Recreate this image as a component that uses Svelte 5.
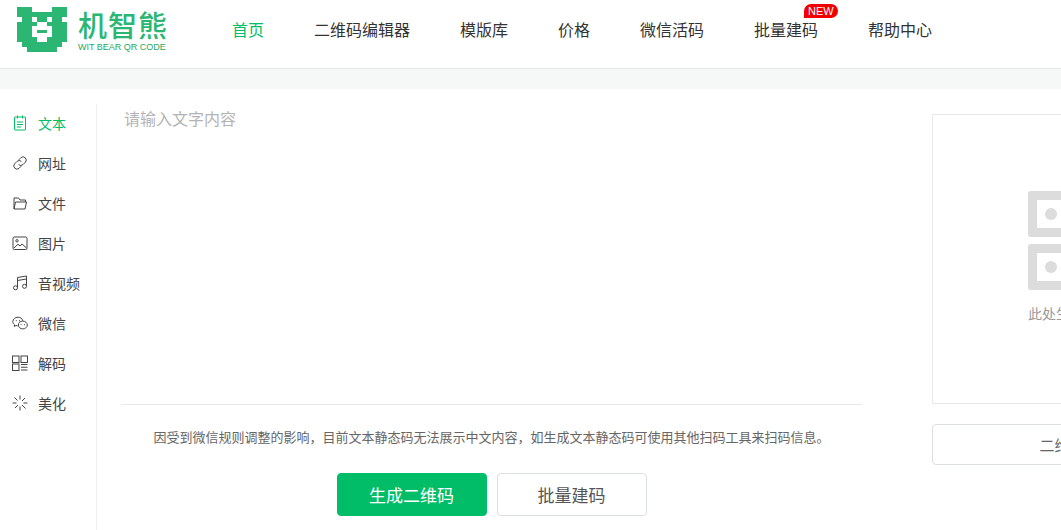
<script>
  const navItems = ['首页', '二维码编辑器', '模版库', '价格', '微信活码', '批量建码', '帮助中心'];

  const sideItems = [
    { name: 'text', label: '文本' },
    { name: 'link', label: '网址' },
    { name: 'file', label: '文件' },
    { name: 'image', label: '图片' },
    { name: 'media', label: '音视频' },
    { name: 'wechat', label: '微信' },
    { name: 'decode', label: '解码' },
    { name: 'style', label: '美化' }
  ];

  // bear head drawn on a 5px pixel grid
  const bear = [
    [0, 0, 15, 5], [35, 0, 15, 5], [0, 5, 50, 5], [5, 10, 40, 5], [0, 15, 50, 20], [5, 35, 40, 5], [10, 40, 30, 5]
  ];
  const face = [
    [15, 10, 5, 5], [30, 10, 5, 5], [20, 15, 10, 4], [15, 19, 20, 11], [20, 30, 10, 5]
  ];

  let text = $state('');
</script>

<div class="page">
  <header class="topbar">
    <div class="logo">
      <svg class="bear" width="50" height="45" viewBox="0 0 50 45" shape-rendering="crispEdges">
        {#each bear as b}
          <rect x={b[0]} y={b[1]} width={b[2]} height={b[3]} fill="#2bb673" />
        {/each}
        {#each face as f}
          <rect x={f[0]} y={f[1]} width={f[2]} height={f[3]} fill="#fff" />
        {/each}
        <rect x="20" y="23" width="10" height="3" fill="#2bb673" />
      </svg>
      <div class="logo-text">
        <span class="logo-name">机智熊</span>
        <span class="logo-sub">WIT BEAR QR CODE</span>
      </div>
    </div>
    <nav class="nav">
      {#each navItems as item, i}
        <a class="nav-item" class:active={i === 0} href="#top">
          {item}
          {#if item === '批量建码'}<span class="badge">NEW</span>{/if}
        </a>
      {/each}
    </nav>
  </header>
  <div class="band"></div>

  <main class="main">
    <aside class="side">
      {#each sideItems as item, i}
        <div class="side-item" class:active={i === 0}>
          <svg class="side-icon" width="16" height="16" viewBox="0 0 16 16" fill="none" stroke="currentColor" stroke-width="1">
            {#if item.name === 'text'}
              <rect x="2.5" y="2" width="11" height="13" rx="0.5" />
              <path d="M5.500 0.500v3M10.500 0.500v3M5 7h6M5 9.500h6M5 12h4" />
            {:else if item.name === 'link'}
              <path d="M6.800 4.800l2.200-2.200a3.200 3.200 0 0 1 4.500 4.500l-2.400 2.400a3.200 3.200 0 0 1-4.500 0" />
              <path d="M9.200 11.200l-2.200 2.200a3.200 3.200 0 0 1-4.500-4.500l2.400-2.400a3.200 3.200 0 0 1 4.500 0" />
            {:else if item.name === 'file'}
              <path d="M2 14V3h4.500l1.500 2h5.500v2" />
              <path d="M2 14l1.500-7h11l-1.500 7z" />
            {:else if item.name === 'image'}
              <rect x="1" y="2" width="14" height="12.500" rx="1.200" />
              <circle cx="5" cy="5.800" r="1.200" />
              <path d="M2 13l4-3.800 2 1.800 2-2 4.500 4" />
            {:else if item.name === 'media'}
              <path d="M5.500 12.500V2.500l9-1.500v10" />
              <path d="M5.500 5.500l9-1.500" />
              <circle cx="3.500" cy="12.800" r="2" />
              <circle cx="12.500" cy="11.300" r="2" />
            {:else if item.name === 'wechat'}
              <path d="M10.800 5.800C10.300 3.500 8.300 2.200 6 2.200 3.100 2.200.8 4.100.8 6.600c0 1.400.7 2.500 1.800 3.300l-.4 1.500 1.700-.9c.6.200 1.100.3 1.700.3" />
              <ellipse cx="10.800" cy="10" rx="4.500" ry="3.900" />
              <path d="M9 9.200v1M12.500 9.200v1M4.300 5.200v1M7.500 5.200v1" />
            {:else if item.name === 'decode'}
              <rect x="0.500" y="1" width="6.500" height="6.500" />
              <rect x="9" y="1" width="6.500" height="6.500" />
              <rect x="0.500" y="9" width="6.500" height="6.500" />
              <path d="M9 9.500h6.500M9 12.250h6.500M9 15h6.500" />
            {:else}
              <path d="M8 .5v4M8 11.500v4M.5 8h4M11.500 8h4M2.500 2.500l3 3M13.500 13.500l-3.500-3.500M13 3l-3 3M3 13l3-3" />
            {/if}
          </svg>
          <span>{item.label}</span>
        </div>
      {/each}
    </aside>

    <section class="editor">
      <textarea class="input" placeholder="请输入文字内容" bind:value={text}></textarea>
      <p class="note">因受到微信规则调整的影响，目前文本静态码无法展示中文内容，如生成文本静态码可使用其他扫码工具来扫码信息。</p>
      <div class="actions">
        <button class="btn primary">生成二维码</button>
        <button class="btn">批量建码</button>
      </div>
    </section>

    <aside class="preview">
      <div class="preview-box">
        <div class="qr-empty">
          {#each [0, 1, 2, 3] as cell (cell)}
            <div class="qr-cell"><i></i></div>
          {/each}
        </div>
        <p class="hint">此处生成二维码</p>
      </div>
      <button class="btn wide">二维码美化</button>
    </aside>
  </main>
</div>

<style>
  :global(html), :global(body) {
    margin: 0;
    overflow: hidden;
    background: #fff;
  }
  .page {
    width: 1061px;
    height: 530px;
    overflow: hidden;
    font-family: "Noto Sans CJK SC", "Liberation Sans", sans-serif;
    color: #333;
  }
  .topbar {
    height: 68px;
    display: flex;
    align-items: flex-start;
    border-bottom: 1px solid #e6e8ea;
    box-sizing: content-box;
  }
  .logo {
    width: 232px;
    flex-shrink: 0;
    display: flex;
    padding: 7px 0 0 17px;
    box-sizing: border-box;
    gap: 11px;
  }
  .logo-text {
    display: flex;
    flex-direction: column;
  }
  .logo-name {
    font-size: 29px;
    line-height: 31px;
    font-weight: 500;
    color: #2bb673;
    letter-spacing: 1px;
    margin-top: 2px;
  }
  .logo-sub {
    font-family: "Liberation Sans", sans-serif;
    font-size: 9px;
    line-height: 11px;
    margin-top: 2px;
    color: #1fa85f;
    white-space: nowrap;
  }
  .nav {
    display: flex;
    gap: 50px;
    padding-top: 18px;
  }
  .nav-item {
    position: relative;
    font-size: 16px;
    line-height: 22px;
    color: #333;
    text-decoration: none;
    white-space: nowrap;
  }
  .nav-item.active {
    color: #02bd68;
  }
  .badge {
    position: absolute;
    left: 50px;
    top: -14px;
    height: 14px;
    padding: 0 4px;
    background: #f00000;
    color: #fff;
    font-family: "Liberation Sans", sans-serif;
    font-size: 11px;
    line-height: 14px;
    border-radius: 7px 7px 7px 0;
  }
  .band {
    height: 20px;
    background: #f6f8f8;
  }
  .main {
    display: flex;
    height: 441px;
    padding-top: 15px;
    box-sizing: border-box;
  }
  .side {
    width: 97px;
    flex-shrink: 0;
    box-sizing: border-box;
    border-right: 1px solid #eceef0;
  }
  .side-item {
    height: 38px;
    margin-bottom: 2px;
    display: flex;
    align-items: center;
    gap: 10px;
    padding-left: 12px;
    font-size: 14px;
    color: #444;
  }
  .side-item.active {
    color: #02bd68;
  }
  .side-icon {
    flex-shrink: 0;
  }
  .editor {
    width: 741px;
    margin-left: 24px;
    flex-shrink: 0;
    display: flex;
    flex-direction: column;
    align-items: center;
  }
  .input {
    width: 100%;
    height: 301px;
    border: none;
    border-bottom: 1px solid #e8e9ec;
    outline: none;
    resize: none;
    padding: 3px 3px 0;
    box-sizing: border-box;
    font-family: inherit;
    font-size: 16px;
    line-height: 22px;
    color: #333;
  }
  .input::placeholder {
    color: #b4b4b4;
  }
  .note {
    margin: 22px 0 0;
    font-size: 13px;
    line-height: 19px;
    color: #666;
    white-space: nowrap;
  }
  .actions {
    display: flex;
    gap: 10px;
    margin-top: 27px;
  }
  .btn {
    width: 150px;
    height: 43px;
    background: #fff;
    border: 1px solid #dcdfe6;
    border-radius: 4px;
    font-family: inherit;
    font-size: 17px;
    color: #555;
    padding: 0;
  }
  .btn.primary {
    background: #02bd68;
    border-color: #02bd68;
    color: #fff;
  }
  .preview {
    width: 290px;
    margin-left: 70px;
    flex-shrink: 0;
    padding-top: 10px;
  }
  .preview-box {
    height: 290px;
    box-sizing: border-box;
    border: 1px solid #e8e9ef;
    display: flex;
    flex-direction: column;
    align-items: center;
    padding-top: 76px;
  }
  .qr-empty {
    display: grid;
    grid-template-columns: 46px 46px;
    gap: 7px;
  }
  .qr-cell {
    width: 46px;
    height: 46px;
    box-sizing: border-box;
    border: 9px solid #dcdcdc;
    border-radius: 3px;
    display: flex;
    align-items: center;
    justify-content: center;
  }
  .qr-cell i {
    width: 12px;
    height: 12px;
    border-radius: 50%;
    background: #dcdcdc;
  }
  .hint {
    margin: 13px 0 0;
    font-size: 14px;
    line-height: 20px;
    color: #999;
  }
  .btn.wide {
    width: 100%;
    height: 41px;
    margin-top: 20px;
    font-size: 15px;
    color: #666;
  }
</style>
